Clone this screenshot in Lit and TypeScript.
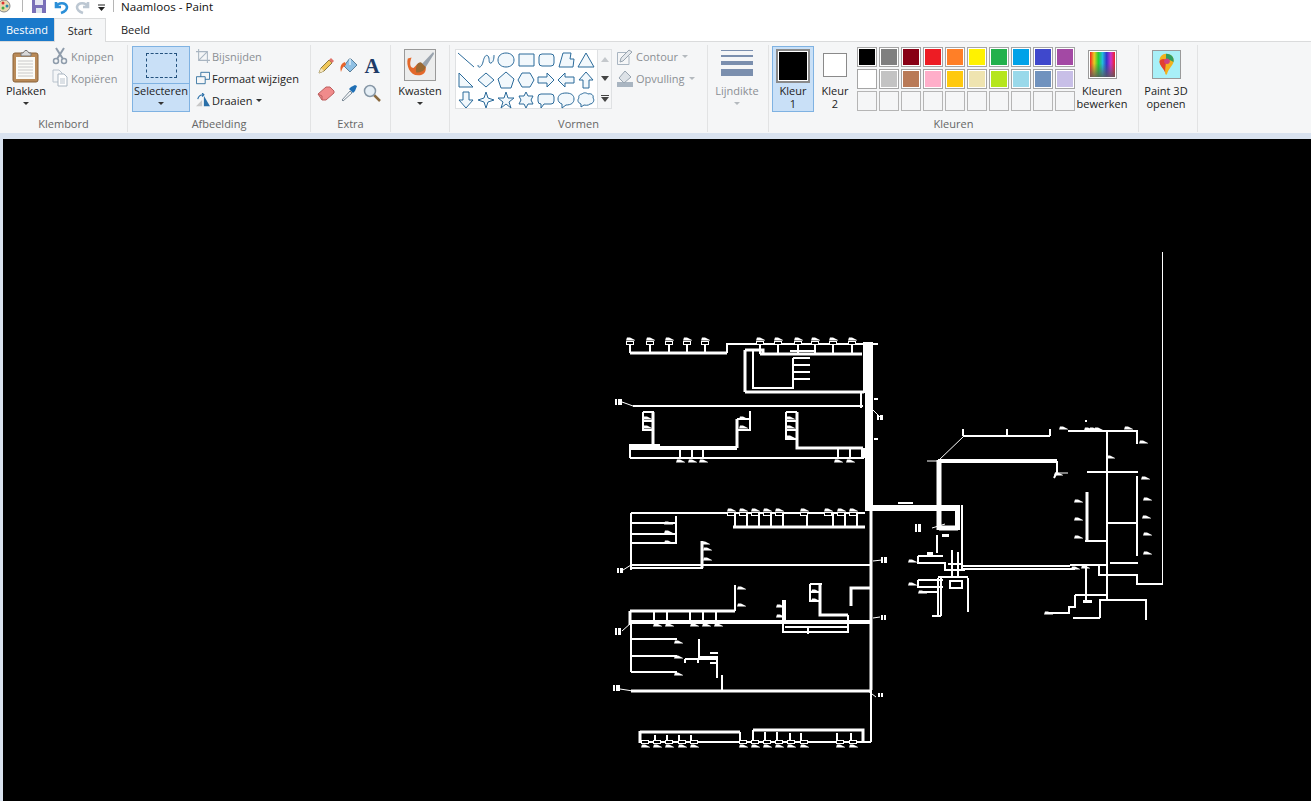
import { LitElement, css, html, svg } from 'lit'
import { customElement } from 'lit/decorators.js'

// colours of the palette, first two rows
const COLORS = [
  '#000000', '#7f7f7f', '#880015', '#ed1c24', '#ff7f27', '#fff200', '#22b14c', '#00a2e8', '#3f48cc', '#a349a4',
  '#ffffff', '#c3c3c3', '#b97a57', '#ffaec9', '#ffc90e', '#efe4b0', '#b5e61d', '#99d9ea', '#7092be', '#c8bfe7',
]

// the shapes gallery, 7 per row, in a 20x20 box
const SHAPES = [
  'M2 3L18 17',
  'M2 15C2 19 6 17 7 12S10 4 12 6S12 14 15 13S18 7 18 5',
  'M10 3C15 3 18 6 18 10S15 17 10 17 2 14 2 10 5 3 10 3Z',
  'M3 4H18V16H3Z',
  'M6 4H15Q18 4 18 7V13Q18 16 15 16H6Q3 16 3 13V7Q3 4 6 4Z',
  'M7 3H15L14 9H18L17 17H3Z',
  'M10 3L18 17H2Z',
  'M3 3L17 17H3Z',
  'M10 3L18 10L10 17L2 10Z',
  'M10 2L18 9L15 18H5L2 9Z',
  'M6 3H14L18 10L14 17H6L2 10Z',
  'M2 7H11V3L18 10L11 17V13H2Z',
  'M18 7H9V3L2 10L9 17V13H18Z',
  'M7 18V10H3L10 2L17 10H13V18Z',
  'M7 2V10H3L10 18L17 10H13V2Z',
  'M10 2L12 8L18 10L12 12L10 18L8 12L2 10L8 8Z',
  'M10 2L12 8H18L13 12L15 18L10 14L5 18L7 12L2 8H8Z',
  'M10 2L12 6H17L15 10L17 14H12L10 18L8 14H3L5 10L3 6H8Z',
  'M5 4H15Q18 4 18 7V11Q18 14 15 14H8L5 18V14Q2 14 2 11V7Q2 4 5 4Z',
  'M10 3C15 3 18 5 18 9S15 15 10 15L6 18V14C3 13 2 11 2 9 2 5 5 3 10 3Z',
  'M6 4C8 2 11 3 12 4C15 3 18 5 17 8C19 10 17 14 14 14C12 16 9 15 8 15L5 17V14C2 13 1 10 3 8C2 6 4 4 6 4Z',
]

// pipes of the drawing in page coordinates, by stroke width
const PIPES: [number, string][] = [
  [1, 'M622 402L633 406M623 570L631 565M622 631L631 623M620 689L633 691M873 410L880 417M873 561L882 560M873 618L880 617M868 691L876 697M1162.5 252V584M932 528L945 524M938.500 460.500L963.500 436.500M927 461H938M1058 473H1068'],
  [2, `M630 353V342M650 353V342M669 353V342M687 353V342M705 353V342
    M727 353V344H878M760 354V344M778 354V344M798 354V344M815 354V344M833 354V344M852 354V344
    M790 351H815V354
    M753 350V388H793V358M793 358H810M793 365H810M793 372H810M793 379H810
    M633 406H863M861 393V408
    M630 444V458M630 458H864M680 448V458M692 448V458M703 448V458M838 448V458M850 448V458
    M643 412H654M643 412V430H654M643 421H654M737 419H750M750 411V430H737
    M786 412H797M786 412V439H797M786 421H797M786 430H797
    M631 513H865M631 513V570M631 523H676M631 534H676M631 543H676M676 516V544
    M735 514V527M747 514V527M759 514V527M771 514V527M783 514V527M807 514V527M833 514V527M845 514V527M857 514V527
    M631 565H871M631 568H703
    M735 585V611M631 622V672M631 639H677M631 656H677M631 672H677
    M654 612V622M667 612V622M690 612V622M703 612V622M716 612V622
    M810 584H822M810 584V601H820M810 592H820
    M848 615V632H783V600M785 600V622M785 627H848M808 627V634
    M699 639V657H718M685 659H717V678M685 659V663M698 659V663M710 653H718M710 663H718M722 675V690
    M871 690V742M640 742H871M655 735V742M667 735V742M679 735V742M691 735V742
    M740 732V742M753 730V742M765 732V742M777 732V742M790 733V742M801 733V742M837 733V742M851 733V742
    M963 436H1050M963 436V429M1007 436V429M1050 436V429
    M1057 461V472L1054 478M962 505V569
    M961 566H1070M961 569H1075
    M1107 430V600M1068 431H1137V444M1087 472H1138M1137 476V556M1107 523H1137M1085 541H1107
    M1110 563H1138M1070 565H1107M1086 565V600M1075 595H1107M1075 595V607H1069V613H1047
    M1099 566V575H1137V584H1163
    M1100 618V600H1146V620M1073 618H1100
    M918 556H943M918 556V563H945V570H965M918 580H943M918 580V587H943
    M938 578V616M941 578V616M968 578V612M938 577H968
    M950 581H962V588H950ZM937 535V553M952 550V578M958 552V578M948 564H962
    M922 592H938M932 616H941`],
  [3, `M630 353H727M760 354H862M745 392H864M745 350H763V354M745 350V392
    M737 448V419M797 412V448H863M653 412V448
    M733 527H865M702 541V568M631 691H871M630 611H735M630 611V625
    M820 584V615H848M851 606V588H871
    M640 732H740M640 731V743M753 730H863V742
    M871 510V690M1087 492V541`],
  [4, 'M630 448H737M631 622H871M938 461H1057'],
  [5, 'M939 460V530M939 528H958M957.500 505V530'],
  [6, 'M865 508H958'],
  [8, 'M869 393V508'],
  [10, 'M868 342V393'],
]

// little lamp blobs at the pipe ends
const BLOBS = [
  [630, 339], [650, 339], [669, 339], [687, 339], [705, 339],
  [760, 339], [778, 339], [798, 339], [815, 339], [833, 339], [852, 339],
  [680, 461], [692, 461], [703, 461], [838, 461], [850, 461],
  [731, 510], [743, 510], [755, 510], [767, 510], [779, 510], [804, 510], [828, 510], [841, 510], [853, 510],
  [645, 746], [657, 746], [669, 746], [682, 746], [694, 746], [743, 746], [755, 746], [767, 746], [779, 746], [791, 746], [804, 746], [840, 746], [853, 746],
  [657, 625], [669, 625], [694, 625], [706, 625], [718, 625],
  [668, 523], [668, 532], [668, 542], [705, 543], [707, 549], [707, 559],
  [647, 418], [647, 427], [790, 418], [790, 427], [790, 437], [743, 418], [743, 427],
  [741, 588], [741, 605], [678, 642], [678, 657], [678, 674], [815, 591], [815, 600], [780, 606], [780, 616],
  [1143, 442], [1145, 478], [1147, 499], [1146, 517], [1147, 534], [1147, 553],
  [1078, 501], [1078, 519], [1078, 537], [912, 561], [912, 584], [922, 592], [1048, 613], [1063, 428],
  [1093, 429], [1098, 429], [1088, 429], [1128, 428], [1058, 474], [1110, 457], [1085, 567], [1075, 568],
]

// rows of lamps that have a small open box on the stem
const BOXED = [
  [630, 343], [650, 343], [669, 343], [687, 343], [705, 343],
  [760, 343], [778, 343], [798, 343], [815, 343], [833, 343], [852, 343],
  [731, 514], [743, 514], [755, 514], [767, 514], [779, 514], [804, 514], [828, 514], [841, 514], [853, 514],
  [645, 742], [657, 742], [669, 742], [682, 742], [694, 742], [743, 742], [755, 742], [767, 742], [779, 742], [791, 742], [804, 742], [840, 742], [853, 742],
]

// the small label marks at the ends of the leader lines
const MARKS = [
  [615, 399, 7, 6], [617, 568, 6, 5], [615, 628, 6, 7], [613, 685, 7, 6], [877, 415, 6, 5], [881, 557, 6, 6], [881, 615, 5, 5], [878, 693, 5, 4], [915, 524, 6, 8],
]

// bits stuck on the pipes
const TAGS = [
  [874, 398, 4, 2], [874, 438, 4, 2], [630, 444, 30, 5], [898, 502, 15, 2], [1083, 600, 9, 3],
  [927, 552, 6, 3], [942, 534, 7, 3], [1085, 420, 2, 2], [862, 620, 8, 4], [861, 448, 4, 10],
]

@customElement('app-root')
export class AppRoot extends LitElement {
  render() {
    return html`
      <div class="title">
        <svg class="qa" width="114" height="18" viewBox="0 0 114 18">
          <circle cx="4" cy="6" r="6" fill="#e8d9b0" stroke="#8a8a8a" />
          <circle cx="3" cy="3" r="1.5" fill="#d33" /><circle cx="7" cy="6" r="1.5" fill="#28a" /><circle cx="3" cy="8" r="1.5" fill="#4a4" />
          <path d="M22.5 0V12M113.5 0V12" stroke="#b5b5b5" />
          <path d="M32 0H46V13H32Z" fill="#7a6fb8" /><path d="M35 0H43V5H35Z" fill="#e6e6f2" /><path d="M36 8H42V13H36Z" fill="#dfe6ee" />
          <path d="M56 2V7H61M56 7C58 2 66 2 67 7C67 10 64 12 61 13" fill="none" stroke="#2b8fd8" stroke-width="2.6" />
          <path d="M88 2V7H83M88 7C86 2 78 2 77 7C77 10 80 12 83 13" fill="none" stroke="#bcc7d2" stroke-width="2.6" />
          <path d="M98 5H105" stroke="#222" /><path d="M98 7H105L101.5 11Z" fill="#222" />
        </svg>
        <span class="title-text">Naamloos - Paint</span>
      </div>
      <div class="tabs">
        <div class="tab file">Bestand</div>
        <div class="tab active">Start</div>
        <div class="tab">Beeld</div>
      </div>
      <div class="ribbon">
        ${this.clipboard()} ${this.image()} ${this.extra()} ${this.brushes()} ${this.shapes()} ${this.lineWidth()} ${this.colors()} ${this.paint3d()}
      </div>
      <div class="canvas">${this.drawing()}</div>
    `
  }

  caret() {
    return html`<i class="caret"></i>`
  }

  clipboard() {
    return html`
      <section class="group g-clip">
        <div class="body">
          <div class="big plakken">
            <svg width="32" height="34" viewBox="0 0 32 34">
              <rect x="3" y="4" width="25" height="29" rx="2" fill="#b98a58" stroke="#8a6238" />
              <rect x="6" y="8" width="19" height="22" fill="#fbfbf7" />
              <path d="M8 12H23M8 15H23M8 18H23M8 21H23M8 24H23M8 27H23" stroke="#c9c9c9" />
              <path d="M11 7V4H13L15 1.500H17L19 4H21V7Z" fill="#d8d8d8" stroke="#777" />
            </svg>
            <span class="label up">Plakken</span>
            ${this.caret()}
          </div>
          <div class="stack">
            <div class="small off">
              <svg width="16" height="18" viewBox="0 0 16 18"><path d="M4 1L11 12M12 1L5 12" stroke="#8e9cab" stroke-width="2" /><circle cx="4" cy="14" r="2.500" fill="none" stroke="#8e9cab" stroke-width="1.500" /><circle cx="12" cy="14" r="2.500" fill="none" stroke="#8e9cab" stroke-width="1.500" /></svg>
              <span>Knippen</span>
            </div>
            <div class="small off">
              <svg width="16" height="18" viewBox="0 0 16 18"><path d="M1 1H7L10 4V13H1Z" fill="#f4f6f8" stroke="#b9c3cd" /><path d="M6 5H12L15 8V17H6Z" fill="#fff" stroke="#a9b5c1" /><path d="M8 10H13M8 12H13M8 14H13" stroke="#b9c3cd" /></svg>
              <span>Kopiëren</span>
            </div>
          </div>
        </div>
        <div class="name">Klembord</div>
      </section>
    `
  }

  image() {
    return html`
      <section class="group g-image">
        <div class="body">
          <div class="select">
            <div class="select-top"><i class="marquee"></i></div>
            <div class="select-bottom"><span class="label">Selecteren</span>${this.caret()}</div>
          </div>
          <div class="stack">
            <div class="small off">
              <svg viewBox="0 0 16 16"><path d="M3 0V13H16M0 3H13V16M3 13L13 3" fill="none" stroke="#a9b5c1" stroke-width="1.200" /></svg>
              <span>Bijsnijden</span>
            </div>
            <div class="small">
              <svg viewBox="0 0 16 16"><path d="M5.500 1.500H15.500V9.500H10.500" fill="none" stroke="#2a6a9a" /><path d="M5.500 1.500V6.500M.5 6.500H10.500V14.500H.5Z" fill="none" stroke="#2a6a9a" /></svg>
              <span>Formaat wijzigen</span>
            </div>
            <div class="small">
              <svg viewBox="0 0 16 16"><path d="M9 3L16 15H9Z" fill="#2a6fa8" /><path d="M0 15L7 8V15Z" fill="#c8c8c8" /><path d="M2 7C3 3 5 2 8 2M7 0L9 2L7 4" fill="none" stroke="#2a6fa8" stroke-width="1.300" /></svg>
              <span>Draaien</span>${this.caret()}
            </div>
          </div>
        </div>
        <div class="name">Afbeelding</div>
      </section>
    `
  }

  extra() {
    return html`
      <section class="group g-extra">
        <div class="body">
          <div class="tools">
            <svg width="18" height="18" viewBox="0 0 18 18"><path d="M2 16L4 11L12 3L15 6L7 14Z" fill="#f0c75a" stroke="#8a7a40" /><path d="M12 3L14 1L17 4L15 6Z" fill="#e0736a" /><path d="M2 16L4 11L7 14Z" fill="#f6e6c0" /></svg>
            <svg width="18" height="18" viewBox="0 0 18 18"><path d="M10 1L17 8L10 15L4 9Z" fill="#8fc0e4" stroke="#5a7f9a" /><path d="M5 5C0 7 0 11 1 15C2 13 2 10 6 8Z" fill="#e8642a" /><path d="M10 1V8" stroke="#fff" /></svg>
            <span class="text-tool">A</span>
            <svg width="18" height="18" viewBox="0 0 18 18"><path d="M1 10L9 3H13L17 7V9L9 16H5Z" fill="#f08b8b" stroke="#bc5f5f" /><path d="M1 10L5 12V16" fill="none" stroke="#bc5f5f" /></svg>
            <svg width="18" height="18" viewBox="0 0 18 18"><path d="M2 16L10 7L12 9L3 17Z" fill="#f4f6f8" stroke="#7e8c98" /><path d="M9 5L13 9L15 7L17 2L15 1L11 3Z" fill="#1f6fb5" /></svg>
            <svg width="18" height="18" viewBox="0 0 18 18"><path d="M11 11L17 17" stroke="#8a6a40" stroke-width="2.500" /><circle cx="7" cy="7" r="5.500" fill="#e6eff6" stroke="#8697a6" stroke-width="1.500" /></svg>
          </div>
        </div>
        <div class="name">Extra</div>
      </section>
    `
  }

  brushes() {
    return html`
      <section class="group g-brush">
        <div class="body">
          <div class="big">
            <svg class="framed pale-bg" width="32" height="32" viewBox="0 0 32 32">
              <path d="M17 16L30 2L31 4L21 20Z" fill="#9aa4ae" />
              <path d="M3 9C1 16 5 27 14 27C20 27 23 23 22 18L17 14C12 13 11 20 8 19C5 18 5 13 7 8Z" fill="#e4682a" />
              <path d="M12 24C17 24 21 22 22 18L17 13C12 13 11 20 12 24Z" fill="#9a6a34" />
            </svg>
            <span class="label up">Kwasten</span>
            ${this.caret()}
          </div>
        </div>
        <div class="name"></div>
      </section>
    `
  }

  shapes() {
    return html`
      <section class="group g-shapes">
        <div class="body">
          <div class="gallery">
            ${SHAPES.map(
              (d) => html`<svg width="20" height="20" viewBox="0 0 20 20"><path d=${d} fill="#f2f8fc" stroke="#2a6a9a" /></svg>`,
            )}
          </div>
          <div class="scroll">
            <span><svg width="8" height="5" viewBox="0 0 8 5"><path d="M4 0L8 5H0Z" fill="#c4c8cc" /></svg></span>
            <span><svg width="8" height="5" viewBox="0 0 8 5"><path d="M0 0H8L4 5Z" fill="#444" /></svg></span>
            <span><svg width="8" height="7" viewBox="0 0 8 7"><path d="M0 .5H8" stroke="#444" /><path d="M0 2H8L4 7Z" fill="#444" /></svg></span>
          </div>
          <div class="stack fill">
            <div class="small off">
              <svg width="16" height="17" viewBox="0 0 16 17"><path d="M.5 4.500H10M.5 4.500V16.500H12V8" fill="none" stroke="#a9b5c1" /><path d="M3 14L4 10L12 2L15 4L6 13Z" fill="#e4e8ec" stroke="#98a4b0" /></svg>
              <span>Contour</span><i class="caret pale"></i>
            </div>
            <div class="small off">
              <svg width="16" height="17" viewBox="0 0 16 17"><path d="M0 12H16V17H0Z" fill="#a9b5c1" /><path d="M8 1L14 7L7 13L2 8Z" fill="#dde2e7" stroke="#98a4b0" /></svg>
              <span>Opvulling</span><i class="caret pale"></i>
            </div>
          </div>
        </div>
        <div class="name">Vormen</div>
      </section>
    `
  }

  lineWidth() {
    return html`
      <section class="group g-line">
        <div class="body">
          <div class="big off">
            <div class="weights"><i class="w1"></i><i class="w2"></i><i class="w3"></i><i class="w4"></i></div>
            <span class="label up">Lijndikte</span>
            <i class="caret pale"></i>
          </div>
        </div>
        <div class="name"></div>
      </section>
    `
  }

  colors() {
    return html`
      <section class="group g-colors">
        <div class="body">
          <div class="current on">
            <i class="swatch one"></i>
            <span class="label">Kleur<br />1</span>
          </div>
          <div class="current">
            <i class="swatch two"></i>
            <span class="label">Kleur<br />2</span>
          </div>
          <div class="palette">
            ${COLORS.map((c) => html`<i class="cell" style="background:${c}"></i>`)}
            ${Array.from({ length: 10 }, () => html`<i class="cell empty"></i>`)}
          </div>
          <div class="big edit">
            <i class="rainbow"></i>
            <span class="label">Kleuren<br />bewerken</span>
          </div>
        </div>
        <div class="name">Kleuren</div>
      </section>
    `
  }

  paint3d() {
    return html`
      <section class="group g-3d">
        <div class="body">
          <div class="big edit">
            <svg class="framed cyan" width="29" height="29" viewBox="0 0 29 29">
              <path d="M14 3C20 3 23 7 22 12C21 16 17 18 15 25C14 26 13 25 13 23C12 19 7 16 7 11C7 6 10 3 14 3Z" fill="#f2b21e" />
              <path d="M14 3C20 3 23 7 22 12C20 10 16 9 14 10Z" fill="#2f9e5f" />
              <path d="M7 11C9 8 12 8 14 10C14 14 13 18 13 23C12 19 7 16 7 11Z" fill="#e2402f" />
              <circle cx="15" cy="11" r="3" fill="#d0407f" />
            </svg>
            <span class="label">Paint 3D<br />openen</span>
          </div>
        </div>
        <div class="name"></div>
      </section>
    `
  }

  // the floor plan itself, page coordinates on a free canvas
  drawing() {
    return svg`
      <svg class="plan" width="1308" height="662" viewBox="3 139 1308 662">
        ${PIPES.map(([w, d]) => svg`<path d=${d} stroke-width=${w} fill="none" stroke="#fff" />`)}
        ${BLOBS.map(([x, y]) => svg`<path d="M${x - 4} ${y + 1.500}L${x - 3} ${y - 1.500}H${x}L${x + 5} ${y + 1}V${y + 1.500}Z" fill="#fff" />`)}
        ${BOXED.map(([x, y]) => svg`<rect x=${x - 3.500} y=${y - 1.500} width="7" height="3" fill="#000" stroke="#fff" />`)}
        ${MARKS.map(([x, y, w, h]) => svg`<rect x=${x} y=${y} width="2" height=${h} fill="#fff" /><rect x=${x + 3} y=${y} width=${w - 3} height=${h} fill="#fff" />`)}
        ${TAGS.map(([x, y, w, h]) => svg`<rect x=${x} y=${y} width=${w} height=${h} fill="#fff" />`)}
      </svg>
    `
  }

  static styles = css`
    :host {
      display: flex;
      flex-direction: column;
      height: 801px;
      overflow: hidden;
      background: #d9e2ef;
      font-family: 'Open Sans', 'Noto Sans', sans-serif;
      font-size: 11px;
      color: #222;
    }
    .title {
      display: flex;
      height: 18px;
      flex: none;
      background: #fff;
    }
    .qa {
      flex: none;
    }
    .title-text {
      margin-left: 7px;
      font-size: 11.6px;
      line-height: 14px;
      color: #111;
    }
    .tabs {
      display: flex;
      height: 24px;
      flex: none;
      background: #fff;
      border-bottom: 1px solid #dadbdc;
      box-sizing: border-box;
    }
    .tab {
      padding: 0 15px;
      line-height: 24px;
      height: 23px;
      box-sizing: border-box;
    }
    .file {
      width: 54px;
      padding: 0;
      text-align: center;
      background: #1979ca;
      color: #fff;
    }
    .active {
      width: 52px;
      height: 24px;
      padding: 0;
      text-align: center;
      background: #f5f6f7;
      border: 1px solid #dadbdc;
      border-bottom: 0;
    }
    .ribbon {
      display: flex;
      height: 91px;
      flex: none;
      background: #f5f6f7;
    }
    .group {
      display: flex;
      flex-direction: column;
      flex: none;
      box-sizing: border-box;
      height: 87px;
      margin-top: 3px;
      border-right: 1px solid #e2e3e4;
    }
    .body {
      display: flex;
      height: 71px;
      padding-top: 1px;
      box-sizing: border-box;
    }
    .name {
      text-align: center;
      color: #666;
      line-height: 15px;
      height: 15px;
    }
    .g-clip { width: 128px; }
    .g-image { width: 183px; }
    .g-extra { width: 80px; }
    .g-brush { width: 59px; }
    .g-shapes { width: 258px; }
    .g-line { width: 61px; }
    .g-colors { width: 370px; }
    .g-3d { width: 59px; }
    .big {
      display: flex;
      flex-direction: column;
      align-items: center;
      flex: none;
      width: 52px;
      text-align: center;
    }
    .label {
      line-height: 13px;
    }
    .up {
      margin-top: 3px;
    }
    .plakken svg {
      margin-top: 3px;
    }
    .plakken .up {
      margin-top: 1px;
    }
    .caret {
      display: inline-block;
      width: 0;
      height: 0;
      margin-top: 5px;
      border: 3px solid transparent;
      border-top-color: #333;
      border-bottom: 0;
    }
    .caret.pale {
      border-top-color: #b4b9be;
    }
    .stack {
      display: flex;
      flex-direction: column;
      flex: none;
      margin-top: -1px;
    }
    .small {
      display: flex;
      align-items: center;
      gap: 3px;
      height: 22px;
      white-space: nowrap;
    }
    .small .caret {
      margin: 1px 0 0 1px;
    }
    .off {
      color: #8b8f94;
    }
    .g-image .body {
      padding-left: 4px;
      gap: 5px;
    }
    .g-image .small {
      gap: 2px;
    }
    .g-image .small svg {
      width: 14px;
      height: 14px;
      margin-left: 1px;
    }
    .g-image .small .caret {
      margin-left: 2px;
    }
    .select {
      display: flex;
      flex-direction: column;
      align-items: stretch;
      flex: none;
      box-sizing: border-box;
      width: 58px;
      height: 66px;
      background: #c9e0f7;
      border: 1px solid #7fb2e2;
      text-align: center;
    }
    .select-top {
      display: flex;
      align-items: center;
      justify-content: center;
      height: 36px;
      border-bottom: 1px solid #7fb2e2;
    }
    .marquee {
      width: 29px;
      height: 23px;
      border: 1px dashed #24527e;
    }
    .select-bottom {
      display: flex;
      flex-direction: column;
      align-items: center;
    }
    .tools {
      display: grid;
      grid-template-columns: repeat(3, 18px);
      grid-auto-rows: 18px;
      gap: 9px 5px;
      padding: 11px 0 0 6px;
    }
    .text-tool {
      font-family: 'Liberation Serif', serif;
      font-size: 21px;
      font-weight: 700;
      line-height: 18px;
      color: #1d3a66;
      text-align: center;
    }
    .framed {
      flex: none;
      background: #fff;
      border: 1px solid #9a9a9a;
      box-sizing: border-box;
    }
    .pale-bg {
      background: #eceded;
    }
    .g-brush .big {
      width: 58px;
    }
    .g-brush svg {
      margin-top: 3px;
    }
    .gallery {
      display: grid;
      grid-template-columns: repeat(7, 20px);
      grid-auto-rows: 20px;
      align-content: space-around;
      flex: none;
      box-sizing: border-box;
      width: 143px;
      height: 60px;
      margin: 3px 0 0 5px;
      background: #fff;
      border: 1px solid #dfe1e3;
    }
    .scroll {
      display: flex;
      flex-direction: column;
      flex: none;
      box-sizing: border-box;
      width: 14px;
      height: 60px;
      margin-top: 3px;
      border: 1px solid #dfe1e3;
      border-left: 0;
    }
    .scroll span {
      display: flex;
      flex: 1;
      align-items: center;
      justify-content: center;
    }
    .fill {
      margin-left: 5px;
    }
    .weights {
      display: flex;
      flex-direction: column;
      gap: 4px;
      width: 32px;
      margin: 4px 0;
    }
    .g-line .big {
      width: 58px;
    }
    .weights i {
      background: #7b8fae;
    }
    .w1 { height: 1px; }
    .w2 { height: 2px; }
    .w3 { height: 4px; }
    .w4 { height: 7px; }
    .g-line .up {
      margin-top: 4px;
    }
    .current {
      display: flex;
      flex-direction: column;
      align-items: center;
      flex: none;
      box-sizing: border-box;
      width: 42px;
      height: 66px;
      text-align: center;
      border: 1px solid transparent;
    }
    .current.on {
      margin-left: 3px;
      background: #c9e0f7;
      border-color: #7fb2e2;
    }
    .swatch {
      display: block;
      box-sizing: border-box;
    }
    .current .label {
      margin-top: auto;
      margin-bottom: 1px;
    }
    .one {
      width: 34px;
      height: 34px;
      margin-top: 2px;
      background: #000;
      border: 2px solid #8a8a8a;
      box-shadow: inset 0 0 0 1px #fff;
    }
    .two {
      width: 24px;
      height: 24px;
      margin-top: 6px;
      background: #fff;
      border: 1px solid #8a8a8a;
    }
    .palette {
      display: grid;
      grid-template-columns: repeat(10, 20px);
      grid-auto-rows: 20px;
      gap: 2px;
      flex: none;
      margin: 1px 0 0 1px;
    }
    .cell {
      box-sizing: border-box;
      border: 2px solid #fff;
      outline: 1px solid #a5a5a5;
      outline-offset: -1px;
    }
    .cell.empty {
      border: 1px solid #b5b5b5;
      outline: 0;
    }
    .edit {
      width: 54px;
    }
    .rainbow {
      box-sizing: border-box;
      width: 29px;
      height: 29px;
      margin-top: 4px;
      border: 2px solid #fff;
      outline: 1px solid #9a9a9a;
      outline-offset: -1px;
      background: linear-gradient(to bottom, transparent 45%, rgba(90, 90, 90, 0.85)),
        linear-gradient(to right, #e22, #ec2, #2c3, #2bd, #33c, #c3c, #e22);
    }
    .edit .label {
      margin-top: 5px;
    }
    .edit .framed {
      margin-top: 4px;
    }
    .cyan {
      background: #a8f0f8;
    }
    .canvas {
      flex: 1;
      margin: 6px 0 0 3px;
      background: #000;
      min-height: 0;
    }
    .plan {
      display: block;
    }
  `
}
